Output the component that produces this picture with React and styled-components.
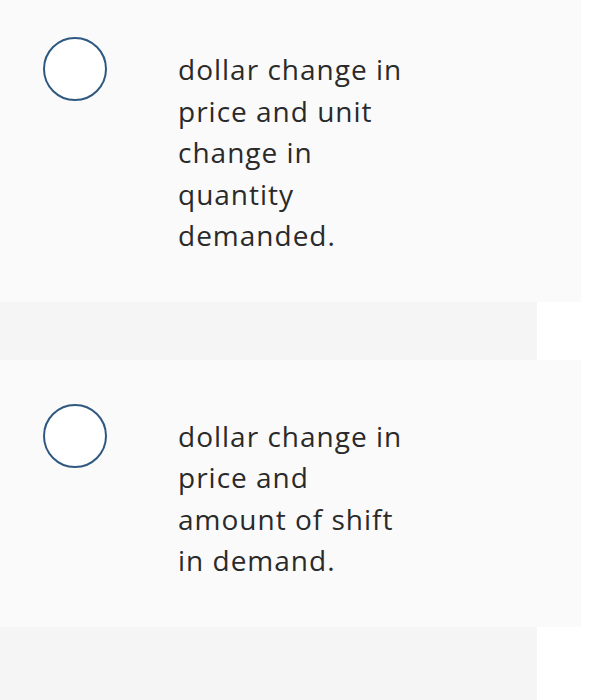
import React from 'react';
import styled, { createGlobalStyle } from 'styled-components';

const GlobalStyle = createGlobalStyle`
	html, body {
		margin: 0;
		padding: 0;
		background: #ffffff;
	}
	body {
		font-family: "Open Sans", Lato, sans-serif;
		color: #2b2b2b;
	}
`;

const Page = styled.div`
	display: flex;
	flex-direction: column;
	width: 610px;
	height: 700px;
	overflow: hidden;
	background: #ffffff;
`;

const Option = styled.label`
	display: flex;
	align-items: flex-start;
	width: 581px;
	box-sizing: border-box;
	padding: 44px 0 45px 43px;
	margin-top: ${(props) => (props.first ? '-7px' : '0')};
	background: #fafafa;
	cursor: pointer;
`;

const Radio = styled.span`
	flex: none;
	width: 64px;
	height: 64px;
	box-sizing: border-box;
	border: 2.5px solid #2e5880;
	border-radius: 50%;
	background: #ffffff;
`;

const OptionText = styled.div`
	width: 236px;
	margin: 12px 0 0 71px;
	font-size: 28px;
	letter-spacing: 1px;
	line-height: 41.5px;
	color: #2a2a2a;
`;

const Spacer = styled.div`
	width: 537px;
	height: ${(props) => props.size}px;
	flex: ${(props) => (props.fill ? '1' : 'none')};
	background: #f5f5f5;
`;

const options = [
	'dollar change in price and unit change in quantity demanded.',
	'dollar change in price and amount of shift in demand.'
];

class App extends React.Component {
	render() {
		return (
			<Page>
				<GlobalStyle />
				<Option first>
					<Radio />
					<OptionText>{options[0]}</OptionText>
				</Option>
				<Spacer size={58} />
				<Option>
					<Radio />
					<OptionText>{options[1]}</OptionText>
				</Option>
				<Spacer size={72} fill />
			</Page>
		);
	}
}

export default App;
